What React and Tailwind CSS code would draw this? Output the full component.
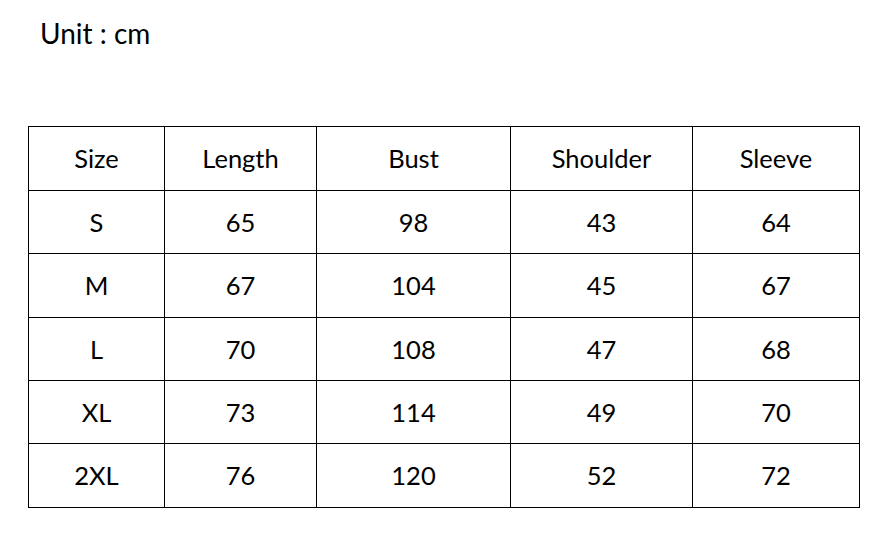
const headers = ["Size", "Length", "Bust", "Shoulder", "Sleeve"];
const rows = [
  ["S", "65", "98", "43", "64"],
  ["M", "67", "104", "45", "67"],
  ["L", "70", "108", "47", "68"],
  ["XL", "73", "114", "49", "70"],
  ["2XL", "76", "120", "52", "72"],
];
const rowHeights = ["h-[64px]", "h-[63px]", "h-[64px]", "h-[63px]", "h-[63px]", "h-[64px]"];

export default function App() {
  const all = [headers, ...rows];
  return (
    <div className="w-[884px] h-[540px] bg-white text-black font-['Lato','Open_Sans',sans-serif]">
      <div className="pl-[40px] pt-[17px] text-[28px] leading-[32px]">Unit : cm</div>
      <div className="ml-[28px] mt-[77px] w-[832px] border-l border-t border-black grid grid-cols-[136px_152px_194px_182px_167px]">
        {all.map((row, r) =>
          row.map((cell, c) => (
            <div
              key={`${r}-${c}`}
              className={`${rowHeights[r]} border-r border-b border-black flex items-center justify-center text-[25.5px]`}
            >
              {cell}
            </div>
          ))
        )}
      </div>
    </div>
  );
}
